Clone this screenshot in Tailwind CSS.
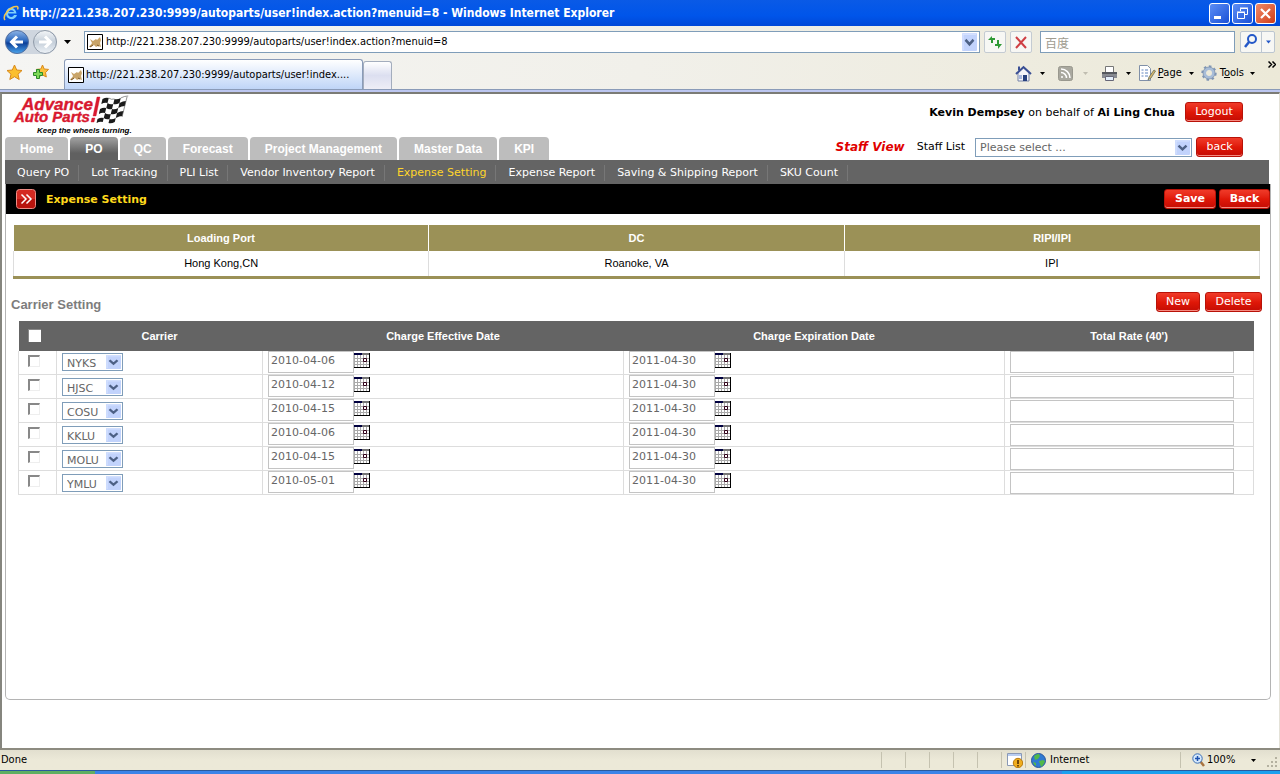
<!DOCTYPE html>
<html lang="en">
<head>
    <meta charset="UTF-8">
    <meta name="viewport" content="width=device-width, initial-scale=1.0">
    <title>Expense Setting</title>
    <script src="https://cdn.jsdelivr.net/npm/@tailwindcss/browser@4"></script>
</head>
<body class="h-screen flex flex-col overflow-hidden bg-white text-black text-[11px] leading-4 font-['DejaVu_Sans_Condensed','DejaVu_Sans',sans-serif]">
    <!-- Shared icons -->
    <svg class="hidden">
        <symbol id="down" viewBox="0 0 15 16" preserveAspectRatio="none">
            <rect width="15" height="16" rx="1" fill="#c2d3fc"/>
            <path d="M1 15V1h13" fill="none" stroke="#dbe6ff"/>
            <path d="M3.500 6l4 4 4-4" fill="none" stroke="#4d6185" stroke-width="2.400"/>
        </symbol>
        <symbol id="arrow" viewBox="0 0 7 4"><path d="M0 0h7L3.500 4z"/></symbol>
        <symbol id="cat" viewBox="0 0 16 16">
            <path d="M.5.5h15v15H.5z" fill="#fff" stroke="#000"/>
            <path d="M2 13c1-2 2-2 3-4L3 5l3 2 3-2 1 1 3-3 1 3-1 3 1 4-3-1-2 1-2-2-3 2z" fill="#c9a468"/>
            <path d="M3 13l3-2M10 11l2 1" stroke="#7c5a2e"/>
        </symbol>
        <symbol id="calendar" viewBox="0 0 16 15">
            <path d="M0 0h16v15H0z" fill="#fff"/>
            <path d="M.5 2v12.500M3.500 2v12M6.500 2v12M9.500 2v12M12.500 2v12M0 5.500h15M0 8.500h15M0 11.500h15" stroke="#aaa"/>
            <path d="M8 0h8v2H8z" fill="#777"/>
            <path d="M0 0h8v2H0z" fill="#000040"/>
            <path d="M15.500 0v15M0 14.500h16" stroke="#000"/>
            <path d="M9.500 5.500h3v3h-3z" fill="#fff" stroke="#300018"/>
        </symbol>
    </svg>

    <!-- Title bar -->
    <div class="h-[26px] shrink-0 flex items-center pl-[3px] pr-1 bg-linear-to-b from-[#0a5ae6] via-[#0055ea] via-60% to-[#0048d8]">
        <svg class="size-4 mr-[3px]" viewBox="0 0 16 16">
            <path d="M13.500 8.500H5c0 4 5 4.500 6 1.500h3c-1.500 6-11 5.500-11-1.500s9-8 10.500 0z" fill="#7fd0fb"/>
            <path d="M5.500 7h5.500c-.5-2.500-5-2.500-5.500 0z" fill="#0a5ae6"/>
            <path d="M2 15C-1 11 7 1 14 1.500c1.500.5 1 2 .5 3" fill="none" stroke="#f3c74c" stroke-width="1.500"/>
        </svg>
        <h1 class="flex-1 text-white text-[12px] font-bold">http://221.238.207.230:9999/autoparts/user!index.action?menuid=8 - Windows Internet Explorer</h1>
        <div class="flex gap-[2px]">
            <button aria-label="Minimize" class="size-[21px] rounded-[3px] border border-white bg-linear-to-br from-[#5c8df5] to-[#1a4fd6]">
                <svg viewBox="0 0 19 19"><path d="M4 12h7v3H4z" fill="#fff"/></svg>
            </button>
            <button aria-label="Restore" class="size-[21px] rounded-[3px] border border-white bg-linear-to-br from-[#5c8df5] to-[#1a4fd6]">
                <svg viewBox="0 0 19 19" fill="none" stroke="#fff"><path d="M7.500 7V4.500h7v6H12M7 4h8M4.500 8.500h7v6h-7zM4 8h8"/></svg>
            </button>
            <button aria-label="Close" class="size-[21px] rounded-[3px] border border-white bg-linear-to-br from-[#f08a68] to-[#d03a10]">
                <svg viewBox="0 0 19 19"><path d="M5 5l9 9M14 5l-9 9" stroke="#fff" stroke-width="2.200"/></svg>
            </button>
        </div>
    </div>

    <!-- Address bar -->
    <div class="h-8 shrink-0 flex items-center px-[5px] bg-linear-to-r from-[#f5f5f3] via-[#f1f0ea] to-[#ece9d8]">
        <div class="flex rounded-full bg-[#cfd6df] gap-1">
            <button aria-label="Back">
                <svg class="size-6" viewBox="0 0 24 24">
                    <defs><linearGradient id="bk" x2="0" y2="1"><stop stop-color="#8fb5e6"/><stop offset=".45" stop-color="#2b68bf"/><stop offset=".55" stop-color="#0c3f98"/><stop offset="1" stop-color="#4ba6ee"/></linearGradient></defs>
                    <circle cx="12" cy="12" r="11.500" fill="url(#bk)" stroke="#5470a0"/>
                    <path d="M12 6.500L6.500 12l5.500 5.500M7 12h11" fill="none" stroke="#fff" stroke-width="3"/>
                </svg>
            </button>
            <button aria-label="Forward">
                <svg class="size-6" viewBox="0 0 24 24">
                    <defs><linearGradient id="fw" x2="0" y2="1"><stop stop-color="#f4f6f8"/><stop offset=".5" stop-color="#c4ced9"/><stop offset="1" stop-color="#eef3f8"/></linearGradient></defs>
                    <circle cx="12" cy="12" r="11.500" fill="url(#fw)" stroke="#8f9aa8"/>
                    <path d="M12 6.500l5.500 5.500-5.500 5.500M17 12H6" fill="none" stroke="#fff" stroke-width="3"/>
                </svg>
            </button>
        </div>
        <svg class="w-[7px] h-1 ml-[7px] mr-[13px]"><use href="#arrow"/></svg>
        <div class="flex-1 h-[22px] flex items-center px-[2px] border border-[#7f9db9] bg-white">
            <svg class="size-4 mr-[3px]"><use href="#cat"/></svg>
            <input aria-label="Address" class="flex-1 outline-none" value="http://221.238.207.230:9999/autoparts/user!index.action?menuid=8">
            <button aria-label="Show addresses"><svg class="w-[15px] h-[18px]"><use href="#down"/></svg></button>
        </div>
        <button aria-label="Refresh" class="ml-1 size-[22px] border border-[#c4cbd2] rounded-[2px] bg-[#f7f7f4]">
            <svg viewBox="0 0 20 20" fill="#2f9a35"><path d="M3 8l4-4v2h3v2H8v3H6V8zM17 12l-4 5v-3h-3v-2h2V8h2v4z"/></svg>
        </button>
        <button aria-label="Stop" class="ml-1 size-[22px] border border-[#c4cbd2] rounded-[2px] bg-[#f7f7f4]">
            <svg viewBox="0 0 20 20" fill="none" stroke="#cf3f44" stroke-width="2"><path d="M5 5l10 11M15 5L5 16"/></svg>
        </button>
        <input aria-label="Search" placeholder="百度" class="ml-2 w-[195px] h-[22px] px-1 border border-[#7f9db9] bg-white text-[12px] font-['Noto_Sans_CJK_SC',sans-serif] placeholder:text-[#a09c90]">
        <div class="ml-[5px] h-[22px] flex border border-[#bcc6d0] rounded-[2px] bg-[#f7f7f4]">
            <button aria-label="Go"><svg class="size-5" viewBox="0 0 20 20" fill="none" stroke="#2458c8"><circle cx="11" cy="7" r="4" stroke-width="2"/><path d="M8 10l-4 5" stroke-width="2.500"/></svg></button>
            <button aria-label="Search options" class="w-[13px] border-l border-[#bcc6d0] flex items-center justify-center"><svg class="w-[5px] h-1" viewBox="0 0 7 4" fill="#2458c8"><path d="M0 0h7L3.500 4z"/></svg></button>
        </div>
    </div>

    <!-- Tab bar -->
    <div class="h-8 shrink-0 flex items-end pl-[6px] pr-1 border-b border-[#8a9bb8] bg-linear-to-r from-[#f5f5f3] via-[#f1f0ea] to-[#ece9d8]">
        <div class="flex gap-[9px] pb-2">
            <button aria-label="Favorites"><svg class="size-[17px]" viewBox="0 0 17 17"><path d="M8.500 1l2.200 5 5.300.5-4 3.700 1.200 5.300-4.700-2.800-4.700 2.800L5 10.200 1 6.500 6.300 6z" fill="#fbbf2e" stroke="#d9891b"/></svg></button>
            <button aria-label="Add to favorites"><svg class="size-[17px]" viewBox="0 0 17 17"><path d="M10.500 1l1.700 4 4.300.4-3 3.200.8 4.400-4-2.200-3.600 2.200.6-4.400-3-3.200 4.500-.4z" fill="#fbc13a" stroke="#d9891b"/><path d="M4.500 5.500h3v3h3v3h-3v3h-3v-3h-3v-3h3z" fill="#7ed957" stroke="#2a8a2a"/></svg></button>
        </div>
        <div class="ml-[15px] w-[299px] h-[30px] flex items-center px-[3px] rounded-t-[3px] border border-b-0 border-[#8a9bb8] bg-linear-to-b from-white to-[#bfd5f7]">
            <svg class="size-4 mr-[2px]"><use href="#cat"/></svg>
            <span class="whitespace-nowrap">http://221.238.207.230:9999/autoparts/user!index....</span>
        </div>
        <button aria-label="New tab" class="w-[29px] h-7 rounded-t-[3px] border border-b-0 border-[#a3adbd] bg-linear-to-b from-white via-[#dcdff0] to-[#eeeef6]"></button>
        <div class="ml-auto h-8 flex items-center">
            <button aria-label="Home" class="flex items-center gap-2">
                <svg class="size-[17px]" viewBox="0 0 17 17"><path d="M3 8v8h11V8L8.500 3z" fill="#f4f4f8" stroke="#7582a8"/><path d="M1 9l7.500-7L16 9" fill="none" stroke="#3a4f94" stroke-width="2"/><path d="M4 1.500v4" stroke="#3a4f94" stroke-width="2"/><path d="M8 10h4v6H8z" fill="#27407e"/><path d="M4 10h3v4H4z" fill="#a7b7dd"/></svg>
                <svg class="w-[5px] h-[3px]" viewBox="0 0 7 4"><path d="M0 0h7L3.500 4z"/></svg>
            </button>
            <button aria-label="Feeds" class="ml-[13px] flex items-center gap-[10px]">
                <svg class="size-[15px]" viewBox="0 0 15 15" fill="none" stroke="#fff" stroke-width="1.500"><rect x=".5" y=".5" width="14" height="14" rx="2" fill="#a9a89f" stroke="#99988e" stroke-width="1"/><path d="M3 3c5 0 9 4 9 9M3 6.500c3 0 5.500 2.500 5.500 5.500"/><circle cx="4" cy="11" r="1" fill="#fff" stroke="none"/></svg>
                <svg class="w-[5px] h-[3px]" viewBox="0 0 7 4" fill="#c0bdb0"><path d="M0 0h7L3.500 4z"/></svg>
            </button>
            <button aria-label="Print" class="ml-[13px] flex items-center gap-2">
                <svg class="size-[17px]" viewBox="0 0 17 17"><path d="M4.500 1.500h8v6h-8z" fill="#fff" stroke="#777"/><path d="M1 7h15v6H1z" fill="#888b91"/><path d="M1 7h15v2H1z" fill="#55585e"/><path d="M4.500 11.500h8v4h-8z" fill="#e4f0fb" stroke="#667"/></svg>
                <svg class="w-[5px] h-[3px]" viewBox="0 0 7 4"><path d="M0 0h7L3.500 4z"/></svg>
            </button>
            <button class="ml-2 flex items-center">
                <svg class="w-[17px] h-4 mr-[2px]" viewBox="0 0 17 16"><path d="M.5.500h8l3 3v12H.5z" fill="#fff" stroke="#8090a8"/><path d="M2.500 5h2M6 5h3M2.500 8h2M6 8h3M2.500 11h2M6 11h3" stroke="#5c82bd"/><path d="M15 5l-5 7-1 3 3-2 4.500-7z" fill="#d8b66a" stroke="#66705c" stroke-width=".8"/></svg>
                <span><u>P</u>age</span>
                <svg class="w-[5px] h-[3px] ml-[7px]" viewBox="0 0 7 4"><path d="M0 0h7L3.500 4z"/></svg>
            </button>
            <button class="ml-[7px] flex items-center">
                <svg class="size-4 mr-[3px]" viewBox="0 0 16 16" fill="none"><circle cx="8" cy="8" r="6.700" stroke="#8197b5" stroke-width="2" stroke-dasharray="2.600 2.600"/><circle cx="8" cy="8" r="4.500" stroke="#a8bdd8" stroke-width="3"/><circle cx="8" cy="8" r="6" stroke="#7489a8" stroke-width=".7"/></svg>
                <span>T<u>o</u>ols</span>
                <svg class="w-[5px] h-[3px] ml-[6px]" viewBox="0 0 7 4"><path d="M0 0h7L3.500 4z"/></svg>
            </button>
            <button aria-label="More tools" class="self-start pt-1 ml-[13px]"><svg class="w-2 h-[7px]" viewBox="0 0 8 7" fill="none" stroke="#000" stroke-width="1.500"><path d="M.5.500l3 3-3 3M4.500.500l3 3-3 3"/></svg></button>
        </div>
    </div>
    <div class="h-[2px] shrink-0 bg-[#bcc6f0]"></div>

    <!-- Page -->
    <div class="flex-1 min-h-0 flex flex-col pl-[3px] pr-2 pb-12 border-t-2 border-l-2 border-t-[#7b7b76] border-l-[#85857e] border-r border-r-[#e4e2d8] font-['DejaVu_Sans',Verdana,sans-serif]">
        <header class="flex justify-between h-[66px] shrink-0">
            <div class="flex flex-col justify-between">
                <svg class="w-[120px] h-[42px] ml-2" viewBox="0 0 120 42">
                    <g fill="#d8182f" stroke="#d8182f" stroke-width=".4" font-family="Liberation Sans" font-weight="bold" font-style="italic">
                        <text font-size="17"><tspan x="9" y="16">Advance</tspan><tspan x="1" y="28" font-size="15">Auto Parts</tspan></text>
                        <path d="M84 3h3l-4 19h-3zM79 24h3l-1 4h-3z"/>
                    </g>
                    <g transform="translate(90 3) skewX(-14)" fill="#1b1b1b">
                        <path d="M0 2q3-2 6-1v5q-3-1-6 1zM12 2q3 1 6-1v5q-3 2-6 1zM6 6q3 2 6 1v5q-3 1-6-1zM18 6q3-2 6-2v5q-3 0-6 2zM0 12q3-2 6-1v5q-3-1-6 1zM12 12q3 1 6-1v5q-3 2-6 1zM6 16q3 2 6 1v5q-3 1-6-1zM18 16q3-2 6-2v5q-3 0-6 2zM0 22q3-2 6-1v4q-3-1-6 1zM12 22q3 1 6-1v4q-3 2-6 1z"/>
                        <path d="M6 1q3 2 6 1M18 1q3-2 7-2M24 0v20" fill="none" stroke="#555" stroke-width=".6"/>
                    </g>
                    <text x="24" y="39" font-size="8" font-family="Liberation Sans" font-weight="bold" font-style="italic">Keep the wheels turning.</text>
                </svg>
                <nav class="flex gap-[2px] text-[12px] font-bold text-white font-['Liberation_Sans',Arial,sans-serif]">
                    <a href="#" class="h-[23px] px-[15px] py-1 rounded-t-[4px] bg-[#bdbdbd]">Home</a>
                    <a href="#" class="h-[23px] px-[15px] py-1 rounded-t-[4px] bg-linear-to-b from-[#9a9a9a] from-10% to-[#606060] to-70%">PO</a>
                    <a href="#" class="h-[23px] px-[14px] py-1 rounded-t-[4px] bg-[#bdbdbd]">QC</a>
                    <a href="#" class="h-[23px] px-[15px] py-1 rounded-t-[4px] bg-[#bdbdbd]">Forecast</a>
                    <a href="#" class="h-[23px] px-[15px] py-1 rounded-t-[4px] bg-[#bdbdbd]">Project Management</a>
                    <a href="#" class="h-[23px] px-[15px] py-1 rounded-t-[4px] bg-[#bdbdbd]">Master Data</a>
                    <a href="#" class="h-[23px] px-[15px] py-1 rounded-t-[4px] bg-[#bdbdbd]">KPI</a>
                </nav>
            </div>
            <div class="flex flex-col items-end justify-between pt-2 pb-[3px] pr-7">
                <div class="flex items-center gap-[10px]">
                    <p class="pt-[2px]"><b>Kevin Dempsey</b> on behalf of <b>Ai Ling Chua</b></p>
                    <button class="h-5 w-[58px] rounded-[3px] border border-[#b81208] text-white bg-linear-to-b from-[#f03a28] via-[#e01808] to-[#c40c04] inset-shadow-[0_-1px_0_#f58a80]">Logout</button>
                </div>
                <div class="flex items-center">
                    <b class="italic text-[12px] text-[#e00000]">Staff View</b>
                    <label for="staff" class="ml-3 mr-[10px]">Staff List</label>
                    <div class="relative">
                        <select id="staff" class="block appearance-none w-[217px] h-[19px] pl-1 pt-px border border-[#7f9db9] bg-white text-[#666]"><option>Please select ...</option></select>
                        <svg class="absolute right-[2px] top-[2px] w-[15px] h-[15px] pointer-events-none"><use href="#down"/></svg>
                    </div>
                    <button class="ml-1 h-5 w-[47px] rounded-[3px] border border-[#b81208] text-white bg-linear-to-b from-[#f03a28] via-[#e01808] to-[#c40c04] inset-shadow-[0_-1px_0_#f58a80]">back</button>
                </div>
            </div>
        </header>

        <nav class="h-6 shrink-0 mr-[2px] pt-[2px] flex items-center bg-[#646464] text-white">
            <a href="#" class="pl-3 pr-[9px] border-r border-[#777]">Query PO</a>
            <a href="#" class="pl-3 pr-[9px] border-r border-[#777]">Lot Tracking</a>
            <a href="#" class="pl-3 pr-[9px] border-r border-[#777]">PLI List</a>
            <a href="#" class="pl-3 pr-[9px] border-r border-[#777]">Vendor Inventory Report</a>
            <a href="#" class="pl-3 pr-[9px] border-r border-[#777] text-[#ffd52b]">Expense Setting</a>
            <a href="#" class="pl-3 pr-[9px] border-r border-[#777]">Expense Report</a>
            <a href="#" class="pl-3 pr-[9px] border-r border-[#777]">Saving &amp; Shipping Report</a>
            <a href="#" class="pl-3 pr-[9px] border-r border-[#777]">SKU Count</a>
        </nav>

        <main class="flex-1 flex flex-col border border-t-0 border-[#b4b4b4] rounded-b-[5px]">
            <div class="h-[30px] flex items-center pl-[10px] gap-[10px] bg-black">
                <svg class="size-5" viewBox="0 0 20 20"><rect x=".5" y=".5" width="19" height="19" rx="3" fill="#d42a22" stroke="#ee8d86"/><path d="M1 10h18v6q0 3-3 3H4q-3 0-3-3z" fill="#b8140e"/><path d="M5.500 5.500L10 10l-4.500 4.500M10.500 5.500L15 10l-4.500 4.500" fill="none" stroke="#fff" stroke-width="1.500"/></svg>
                <h2 class="flex-1 pt-[2px] font-bold text-[#ffd91c]">Expense Setting</h2>
                <div class="flex gap-[3px] font-bold">
                    <button class="h-5 w-[52px] rounded-[3px] border border-[#b81208] text-white bg-linear-to-b from-[#f03a28] via-[#e01808] to-[#c40c04] inset-shadow-[0_-1px_0_#f58a80]">Save</button>
                    <button class="h-5 w-[51px] rounded-[3px] border border-[#b81208] text-white bg-linear-to-b from-[#f03a28] via-[#e01808] to-[#c40c04] inset-shadow-[0_-1px_0_#f58a80]">Back</button>
                </div>
            </div>

            <!-- Route -->
            <div class="mt-[11px] ml-[7px] mr-[10px]">
                <table class="w-full table-fixed text-center text-[11px] font-['Liberation_Sans',Arial,sans-serif] border-b-3 border-[#9b9157]">
                    <thead class="bg-[#9b9157] text-white">
                        <tr class="h-[26px]"><th>Loading Port</th><th class="border-l border-white">DC</th><th class="border-l border-white">RIPI/IPI</th></tr>
                    </thead>
                    <tbody>
                        <tr class="h-[26px]"><td class="border-l border-[#ddd]">Hong Kong,CN</td><td class="border-l border-[#ddd]">Roanoke, VA</td><td class="border-x border-[#ddd]">IPI</td></tr>
                    </tbody>
                </table>
            </div>

            <div class="mt-[13px] mb-[9px] pl-[5px] pr-2 h-5 flex items-center">
                <h3 class="flex-1 pt-[6px] text-[13px] font-bold text-[#7d7d7d] font-['Liberation_Sans',Arial,sans-serif]">Carrier Setting</h3>
                <div class="flex gap-[5px]">
                    <button class="h-5 w-11 rounded-[3px] border border-[#b81208] text-white bg-linear-to-b from-[#f03a28] via-[#e01808] to-[#c40c04] inset-shadow-[0_-1px_0_#f58a80]">New</button>
                    <button class="h-5 w-[57px] rounded-[3px] border border-[#b81208] text-white bg-linear-to-b from-[#f03a28] via-[#e01808] to-[#c40c04] inset-shadow-[0_-1px_0_#f58a80]">Delete</button>
                </div>
            </div>

            <!-- Carriers -->
            <div class="ml-3 mr-4">
                <table class="w-full table-fixed">
                    <thead class="bg-[#646464] text-white text-[11px] font-['Liberation_Sans',Arial,sans-serif]">
                        <tr class="h-[30px]">
                            <th class="w-[38px] pl-[9px] text-left"><input type="checkbox" aria-label="Select all carriers" class="block appearance-none size-[13px] bg-white border-t border-l border-[#888]"></th>
                            <th class="w-[206px]">Carrier</th>
                            <th class="w-[361px]">Charge Effective Date</th>
                            <th class="w-[381px]">Charge Expiration Date</th>
                            <th>Total Rate (40')</th>
                        </tr>
                    </thead>
                    <tbody id="carriers"></tbody>
                </table>
            </div>
        </main>
    </div>

    <!-- Status bar -->
    <div class="h-[22px] shrink-0 flex items-center pl-[1px] border-t-2 border-[#8d8b80] bg-linear-to-b from-[#e2dfcf] via-[#ece9d8] to-[#ece9d8]">
        <span class="flex-1">Done</span>
        <div class="h-4 flex items-center">
            <span class="w-6 h-4 border-l border-[#c5c2b0]"></span>
            <span class="w-6 h-4 border-l border-[#c5c2b0]"></span>
            <span class="w-6 h-4 border-l border-[#c5c2b0]"></span>
            <span class="w-6 h-4 border-l border-[#c5c2b0]"></span>
            <span class="w-6 h-4 border-l border-[#c5c2b0]"></span>
            <span class="w-6 h-4 border-l border-[#c5c2b0] pl-[5px]">
                <svg class="size-4" viewBox="0 0 16 16"><path d="M.5 1.500h14v12H.5z" fill="#fff" stroke="#8a99b5"/><path d="M1 2h13v2H1z" fill="#b9cdf0"/><circle cx="11" cy="11" r="4.700" fill="#f0ad1e" stroke="#b97a0c"/><path d="M11 8v4M11 13v1.500" stroke="#4a2600" stroke-width="1.500"/></svg>
            </span>
            <span class="w-[155px] h-4 border-l border-[#c5c2b0] flex items-center pl-[5px] gap-1">
                <svg class="size-[15px] shrink-0" viewBox="0 0 15 15"><circle cx="7.500" cy="7.500" r="7" fill="#2f79d2" stroke="#2a549c"/><path d="M3 3q3-2.500 5-2l1 2-2 3-3 1zM8 8l4-1 2 1q-1 4-4 6zM2 9l3 1v3q-2-1-3-4z" fill="#53b848"/></svg>
                Internet
            </span>
            <span class="w-[100px] h-4 border-l border-[#c5c2b0] flex items-center pl-[11px] pr-[2px]">
                <svg class="w-[13px] h-[14px] mr-[2px] shrink-0" viewBox="0 0 13 14"><path d="M8 8l4 5" stroke="#a97440" stroke-width="2.500"/><circle cx="5.500" cy="5.500" r="4.700" fill="#d6e9fb" stroke="#3a6eb5"/><path d="M3 5.500h5M5.500 3v5" stroke="#1d52b0" stroke-width="1.500"/></svg>
                100%
                <svg class="w-[5px] h-[3px] ml-4 shrink-0" viewBox="0 0 7 4"><path d="M0 0h7L3.500 4z"/></svg>
                <svg class="w-[11px] h-[11px] ml-auto self-end shrink-0" viewBox="0 0 11 11" fill="#b4b1a0"><path d="M8 0h2v2H8zM4 4h2v2H4zM8 4h2v2H8zM0 8h2v2H0zM4 8h2v2H4zM8 8h2v2H8z"/></svg>
            </span>
        </div>
    </div>
    <div class="h-1 shrink-0 flex border-t border-[#2a5a9c]">
        <div class="w-[95px] bg-[#5fae62]"></div>
        <div class="flex-1 bg-[#3b83e8]"></div>
        <div class="w-[218px] bg-[#1ba0ee]"></div>
    </div>

    <script>
        const carriers = [
            ['NYKS', '2010-04-06', '2011-04-30'],
            ['HJSC', '2010-04-12', '2011-04-30'],
            ['COSU', '2010-04-15', '2011-04-30'],
            ['KKLU', '2010-04-06', '2011-04-30'],
            ['MOLU', '2010-04-15', '2011-04-30'],
            ['YMLU', '2010-05-01', '2011-04-30'],
        ];

        const dateField = (label, value) => `
            <div class="flex h-[23px]">
                <input type="text" aria-label="${label}" value="${value}" class="w-[86px] h-[22px] pl-[2px] pb-[3px] border border-[#c4c4c4] bg-white text-[#666] outline-none">
                <button aria-label="Pick ${label}" class="h-[15px] mt-[2px]"><svg class="w-4 h-[15px]"><use href="#calendar"/></svg></button>
            </div>`;

        document.getElementById('carriers').innerHTML = carriers.map(([code, start, end]) => `
            <tr class="h-6 border-b border-[#ddd]">
                <td class="border-l border-[#ddd] pl-[9px]"><input type="checkbox" aria-label="Select ${code}" class="block mb-[3px] appearance-none size-3 bg-white border-t-2 border-l-2 border-t-[#888] border-l-[#888] border-r border-b border-r-[#eee] border-b-[#eee]"></td>
                <td class="border-l border-[#ddd] pl-[5px]">
                    <div class="relative w-[61px] h-[18px]">
                        <select aria-label="Carrier" class="block appearance-none w-[61px] h-[18px] pl-1 pt-[2px] border border-[#7f9db9] bg-white text-[#666]"><option>${code}</option></select>
                        <svg class="absolute right-[2px] top-[2px] w-[15px] h-[14px] pointer-events-none"><use href="#down"/></svg>
                    </div>
                </td>
                <td class="border-l border-[#ddd] pl-[5px]">${dateField('Charge effective date', start)}</td>
                <td class="border-l border-[#ddd] pl-[5px]">${dateField('Charge expiration date', end)}</td>
                <td class="border-x border-[#ddd] pl-[5px]"><input type="text" aria-label="Total rate" class="block w-[224px] h-[22px] border border-[#c4c4c4] bg-white"></td>
            </tr>`).join('');
    </script>
</body>
</html>
